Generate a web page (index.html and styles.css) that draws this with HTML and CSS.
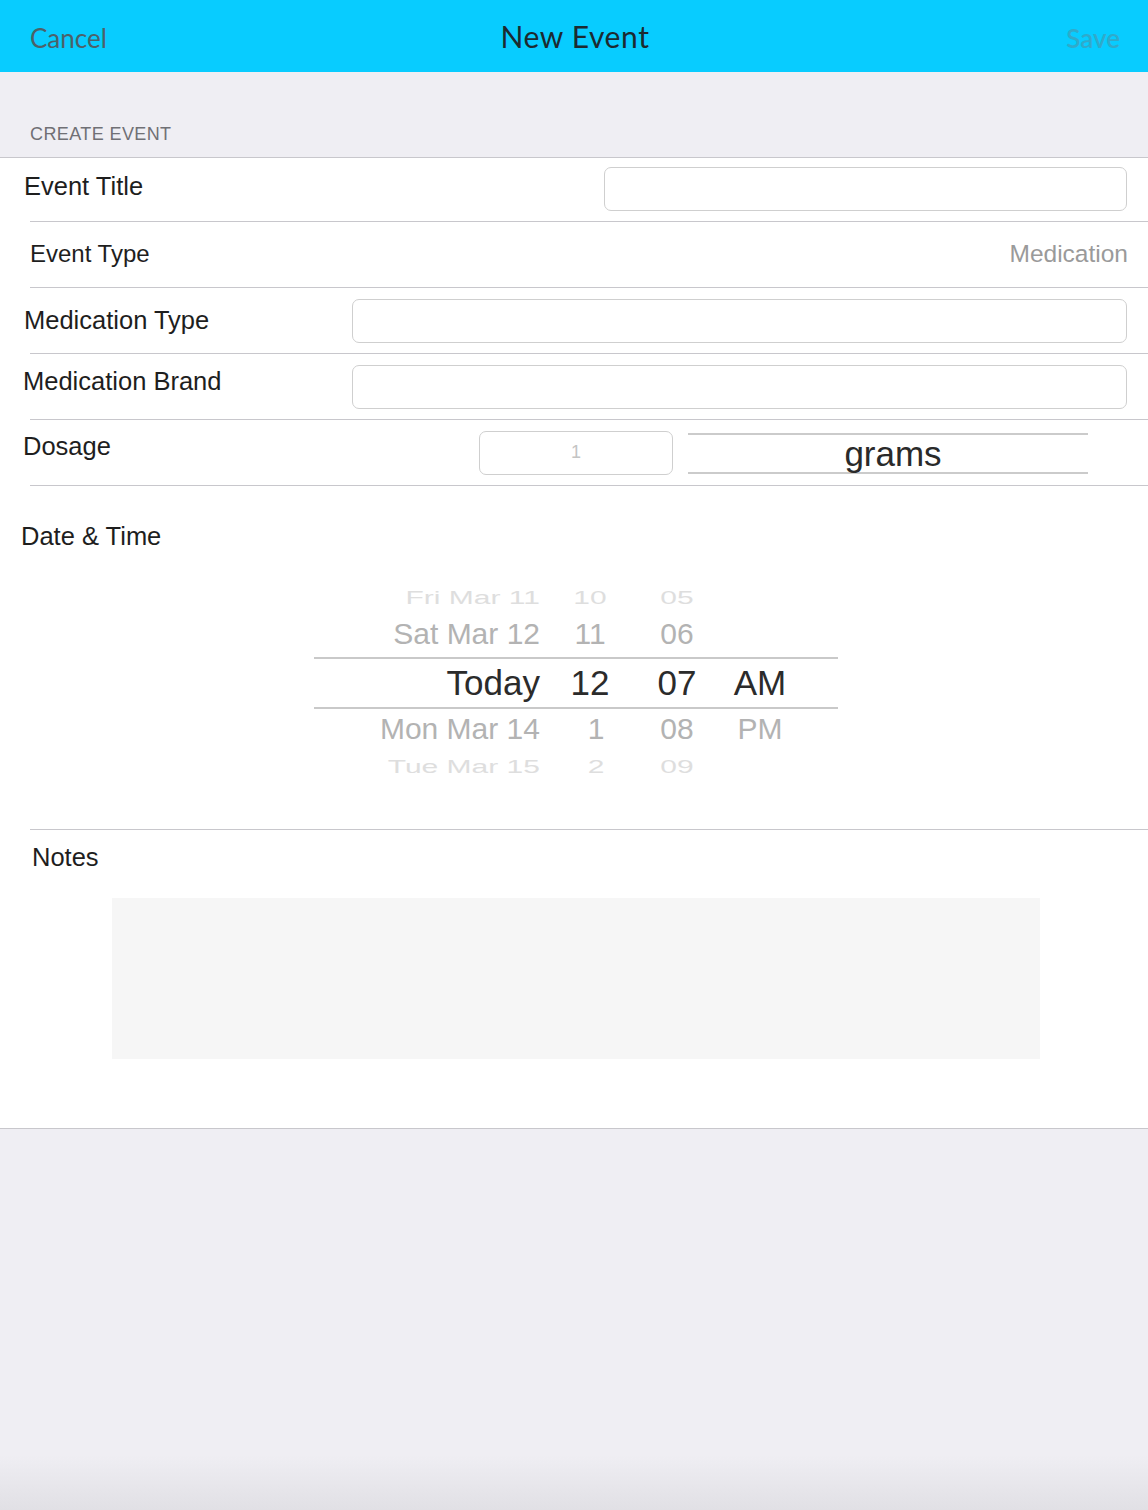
FILE: index.html
```html
<!DOCTYPE html>
<html>
<head>
<meta charset="utf-8">
<link rel="stylesheet" href="styles.css">
</head>
<body>
<header class="navbar">
  <span class="nav-btn cancel">Cancel</span>
  <span class="nav-title">New Event</span>
  <span class="nav-btn save">Save</span>
</header>
<div class="section-head">CREATE EVENT</div>
<main class="form">
  <div class="row r1">
    <span class="label l1">Event Title</span>
    <div class="input in-title"></div>
  </div>
  <div class="row r2">
    <span class="label l2">Event Type</span>
    <span class="value">Medication</span>
  </div>
  <div class="row r3">
    <span class="label l3">Medication Type</span>
    <div class="input in-wide"></div>
  </div>
  <div class="row r4">
    <span class="label l4">Medication Brand</span>
    <div class="input in-wide"></div>
  </div>
  <div class="row r5">
    <span class="label l5">Dosage</span>
    <div class="dosage">
      <div class="input in-dose">1</div>
      <div class="unit-picker"><span>grams</span></div>
    </div>
  </div>
  <section class="datetime">
    <div class="label dt-label">Date &amp; Time</div>
    <div class="picker">
      <div class="prow far top"><span class="c1">Fri Mar 11</span><span class="c2">10</span><span class="c3">05</span><span class="c4"></span></div>
      <div class="prow near up"><span class="c1">Sat Mar 12</span><span class="c2">11</span><span class="c3">06</span><span class="c4"></span></div>
      <div class="prow sel"><span class="c1">Today</span><span class="c2">12</span><span class="c3">07</span><span class="c4">AM</span></div>
      <div class="prow near low"><span class="c1">Mon Mar 14</span><span class="c2 one">1</span><span class="c3">08</span><span class="c4">PM</span></div>
      <div class="prow far bottom"><span class="c1">Tue Mar 15</span><span class="c2 one">2</span><span class="c3">09</span><span class="c4"></span></div>
    </div>
  </section>
  <section class="notes">
    <div class="label notes-label">Notes</div>
    <div class="notes-box"></div>
  </section>
</main>
</body>
</html>
```
FILE: styles.css
```css
* { box-sizing: border-box; }
html, body { margin: 0; padding: 0; }
body {
  width: 1148px;
  min-height: 1510px;
  font-family: "Liberation Sans", Arial, sans-serif;
  background: linear-gradient(to bottom, #efeef3 0px, #efeef3 1455px, #e1e0e5 1510px);
}
.navbar {
  height: 72px;
  background: #08ccff;
  display: flex;
  align-items: center;
  justify-content: space-between;
  padding: 0 28px 0 30px;
  font-family: "Lato", "Open Sans", sans-serif;
}
.nav-btn { font-size: 26px; padding-top: 4px; }
.cancel { color: #4c6169; width: 100px; }
.save { color: #30aacb; width: 100px; text-align: right; font-weight: 600; }
.nav-title { font-size: 30px; color: #1c2a30; letter-spacing: 0.6px; padding-bottom: 1px; }
.section-head {
  height: 85px;
  padding: 52px 0 0 30px;
  font-size: 18px;
  color: #707075;
  letter-spacing: 0.4px;
}
.form {
  background: #fff;
  border-top: 1px solid #c8c7cc;
  border-bottom: 1px solid #c8c7cc;
}
.row {
  display: flex;
  align-items: flex-start;
  height: 66px;
  background: linear-gradient(#c8c7cc, #c8c7cc) no-repeat 30px 100% / calc(100% - 30px) 1px;
}
.row.r1 { height: 64px; }
.label {
  font-size: 25.5px;
  line-height: 30px;
  color: #1e1e1e;
  flex: none;
}
.l1 { padding: 13px 0 0 24px; }
.l2 { padding: 17px 0 0 30px; font-size: 24px; }
.l3 { padding: 17px 0 0 24px; }
.l4 { padding: 12px 0 0 23px; }
.l5 { padding: 11px 0 0 23px; }
.input {
  height: 44px;
  border: 1.5px solid #cfcfcf;
  border-radius: 7px;
  background: #fff;
}
.in-title { margin: 9px 21px 0 auto; width: 523px; }
.in-wide { margin: 11px 21px 0 auto; width: 775px; }
.value {
  margin: 17px 20px 0 auto;
  font-size: 24.5px;
  line-height: 30px;
  color: #9a9a9a;
}
.dosage {
  margin: 11px 60px 0 auto;
  display: flex;
  gap: 15px;
}
.in-dose {
  width: 194px;
  text-align: center;
  line-height: 40px;
  font-size: 18px;
  color: #c4c4c4;
}
.unit-picker {
  width: 400px;
  height: 41px;
  margin-top: 2px;
  padding-left: 10px;
  border-top: 2px solid #cbcbcb;
  border-bottom: 2px solid #cbcbcb;
  text-align: center;
  font-size: 35px;
  line-height: 37px;
  color: #2a2a2a;
}
.datetime {
  height: 344px;
  padding-top: 35px;
  background: linear-gradient(#c8c7cc, #c8c7cc) no-repeat 30px 100% / calc(100% - 30px) 1px;
}
.dt-label { padding-left: 21px; }
.picker {
  margin: 29px 0 0 314px;
  width: 524px;
}
.prow {
  display: grid;
  grid-template-columns: 231px 90px 84px 82px 1fr;
  align-items: center;
  font-size: 30px;
  color: #b3b3b3;
  overflow: hidden;
}
.prow .c1 { text-align: right; padding-right: 5px; }
.prow .c2, .prow .c3, .prow .c4 { text-align: center; }
.prow .one { padding-left: 12px; }
.prow.near { height: 42px; }
.prow.up { padding-bottom: 5px; }
.prow.low { height: 39px; }
.prow.sel {
  height: 52px;
  border-top: 2px solid #c9c9c9;
  border-bottom: 2px solid #c9c9c9;
  font-size: 35px;
  color: #2b2b2b;
}
.prow.far {
  height: 35px;
  color: #dedede;
}
.prow.far span { display: block; transform: scaleY(0.62); }
.prow.top span { margin-top: 0; }
.prow.bottom span { margin-top: 2px; }
.notes {
  height: 298px;
  padding-top: 12px;
}
.notes-label { padding-left: 32px; }
.notes-box {
  margin: 26px 0 0 112px;
  width: 928px;
  height: 161px;
  background: #f6f6f6;
}
```
